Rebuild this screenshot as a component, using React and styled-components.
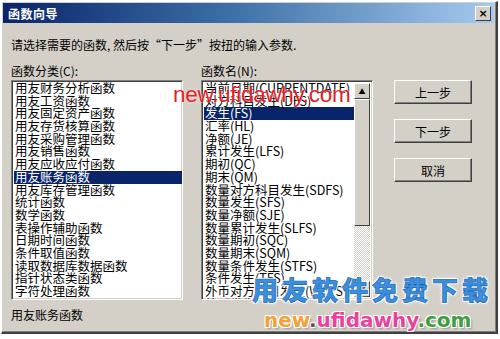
import React from "react";
import styled, { createGlobalStyle } from "styled-components";

const GlobalStyle = createGlobalStyle`
  body {
    margin: 0;
    background: #ffffff;
    font-family: "Noto Sans CJK SC", "DejaVu Sans", sans-serif;
  }
`;

const Dialog = styled.div`
  position: relative;
  width: 494px;
  height: 330px;
  margin: 1px 0 0 1px;
  background: #d4d0c8;
  border-top: 1px solid #ffffff;
  border-left: 1px solid #ffffff;
  border-right: 2px solid #404040;
  border-bottom: 2px solid #404040;
  box-shadow: inset -1px -1px 0 #808080;
  overflow: hidden;
`;

const TitleBar = styled.div`
  display: flex;
  align-items: center;
  justify-content: space-between;
  height: 20px;
  margin: 1px 2px 0 1px;
  padding: 0 3px 0 5px;
  background: linear-gradient(to right, #0a246a 0%, #3a6ea5 45%, #a6caf0 100%);
`;

const TitleText = styled.span`
  color: #ffffff;
  font-size: 12px;
  font-weight: bold;
  letter-spacing: 0.5px;
`;

const CloseButton = styled.div`
  width: 14px;
  height: 13px;
  display: flex;
  align-items: center;
  justify-content: center;
  background: #d4d0c8;
  border-top: 1px solid #ffffff;
  border-left: 1px solid #ffffff;
  border-right: 1px solid #404040;
  border-bottom: 1px solid #404040;
  font-family: "DejaVu Sans", sans-serif;
  font-size: 11px;
  font-weight: bold;
  line-height: 1;
  color: #000;
`;

const Body = styled.div`
  padding: 0 0 0 9px;
`;

const Instruction = styled.div`
  margin-top: 15px;
  font-size: 12px;
  line-height: 14px;
  color: #000;
`;

const Row = styled.div`
  display: flex;
  margin-top: 12px;
`;

const Column = styled.div`
  display: flex;
  flex-direction: column;
  width: ${(p) => p.$width}px;
  margin-right: ${(p) => p.$gap || 0}px;
`;

const Label = styled.div`
  font-size: 12px;
  line-height: 14px;
  height: 14px;
  margin-bottom: 2px;
  color: #000;
`;

const ListBox = styled.div`
  display: flex;
  height: 220px;
  background: #ffffff;
  border-top: 1px solid #808080;
  border-left: 1px solid #808080;
  border-right: 1px solid #ffffff;
  border-bottom: 1px solid #ffffff;
  box-shadow: inset 1px 1px 0 #404040, inset -1px -1px 0 #d4d0c8;
  box-sizing: border-box;
  overflow: hidden;
`;

const Items = styled.div`
  flex: 1;
  padding: 1px 0 0 2px;
  overflow: hidden;
`;

const Item = styled.div`
  height: 12.7px;
  line-height: 12.7px;
  font-size: 12.5px;
  padding-left: 1px;
  white-space: nowrap;
  color: ${(p) => (p.$selected ? "#ffffff" : "#000000")};
  background: ${(p) => (p.$selected ? "#0a246a" : "transparent")};
`;

const ScrollBar = styled.div`
  display: flex;
  flex-direction: column;
  width: 16px;
  margin: 2px 2px 2px 0;
  background-color: #ece9e4;
  background-image: repeating-conic-gradient(#ffffff 0 25%, #d4d0c8 0 50%);
  background-size: 2px 2px;
`;

const ScrollPart = styled.div`
  height: ${(p) => p.$h}px;
  flex: ${(p) => (p.$grow ? 1 : "none")};
  display: flex;
  align-items: center;
  justify-content: center;
  box-sizing: border-box;
  background: ${(p) => (p.$track ? "transparent" : "#d4d0c8")};
  border-top: ${(p) => (p.$track ? "none" : "1px solid #ffffff")};
  border-left: ${(p) => (p.$track ? "none" : "1px solid #ffffff")};
  border-right: ${(p) => (p.$track ? "none" : "1px solid #404040")};
  border-bottom: ${(p) => (p.$track ? "none" : "1px solid #404040")};
  font-size: 7px;
  color: #000;
`;

const Buttons = styled.div`
  display: flex;
  flex-direction: column;
  gap: 15px;
  padding-top: 16px;
`;

const Button = styled.div`
  width: 78px;
  height: 24px;
  box-sizing: border-box;
  display: flex;
  align-items: center;
  justify-content: center;
  font-size: 12px;
  color: #000;
  background: #d4d0c8;
  border-top: 1px solid #ffffff;
  border-left: 1px solid #ffffff;
  border-right: 1px solid #404040;
  border-bottom: 1px solid #404040;
  box-shadow: inset -1px -1px 0 #808080;
`;

const Status = styled.div`
  margin-top: 8px;
  font-size: 12px;
  line-height: 14px;
  color: #000;
`;

const MarkRed = styled.div`
  position: absolute;
  left: 171px;
  top: 80px;
  font-family: "Liberation Sans", Arial, sans-serif;
  font-size: 22.5px;
  letter-spacing: -0.3px;
  color: #e51c23;
  text-shadow: 0 0 2px #ffffff;
  pointer-events: none;
`;

const MarkBlue = styled.div`
  position: absolute;
  left: 250px;
  top: 272px;
  font-size: 26px;
  font-weight: 900;
  letter-spacing: 4px;
  line-height: 30px;
  color: #3b8fdc;
  -webkit-text-stroke: 0.6px #1b5fae;
  text-shadow: 1px 1px 0 #ffffff, -1px -1px 0 #ffffff, 1px -1px 0 #ffffff,
    -1px 1px 0 #ffffff, 0 0 4px #ffffff;
  pointer-events: none;
`;

const MarkUrl = styled.div`
  position: absolute;
  left: 262px;
  top: 306px;
  font-family: "DejaVu Sans", sans-serif;
  font-size: 20px;
  font-weight: bold;
  line-height: 24px;
  text-shadow: 1px 1px 0 #ffffff, -1px -1px 0 #ffffff, 1px -1px 0 #ffffff,
    -1px 1px 0 #ffffff, 2px 2px 2px #999999;
  pointer-events: none;
`;

const Part = styled.span`
  color: ${(p) => p.$color};
`;

const categories = [
  "用友财务分析函数",
  "用友工资函数",
  "用友固定资产函数",
  "用友存货核算函数",
  "用友采购管理函数",
  "用友销售函数",
  "用友应收应付函数",
  "用友账务函数",
  "用友库存管理函数",
  "统计函数",
  "数学函数",
  "表操作辅助函数",
  "日期时间函数",
  "条件取值函数",
  "读取数据库数据函数",
  "指针状态类函数",
  "字符处理函数",
];

const functions = [
  "当前日期(CURRENTDATE)",
  "对方科目发生(DFS)",
  "发生(FS)",
  "汇率(HL)",
  "净额(JE)",
  "累计发生(LFS)",
  "期初(QC)",
  "期末(QM)",
  "数量对方科目发生(SDFS)",
  "数量发生(SFS)",
  "数量净额(SJE)",
  "数量累计发生(SLFS)",
  "数量期初(SQC)",
  "数量期末(SQM)",
  "数量条件发生(STFS)",
  "条件发生(TFS)",
  "外币对方科目发生(WDFS)",
  "外币发生(WFS)",
];

export default function App() {
  return (
    <>
      <GlobalStyle />
      <Dialog>
        <TitleBar>
          <TitleText>函数向导</TitleText>
          <CloseButton>×</CloseButton>
        </TitleBar>
        <Body>
          <Instruction>请选择需要的函数, 然后按“下一步”按扭的输入参数.</Instruction>
          <Row>
            <Column $width={172} $gap={18}>
              <Label>函数分类(C):</Label>
              <ListBox>
                <Items>
                  {categories.map((c) => (
                    <Item key={c} $selected={c === "用友账务函数"}>
                      {c}
                    </Item>
                  ))}
                </Items>
              </ListBox>
            </Column>
            <Column $width={172} $gap={21}>
              <Label>函数名(N):</Label>
              <ListBox>
                <Items>
                  {functions.map((f) => (
                    <Item key={f} $selected={f === "发生(FS)"}>
                      {f}
                    </Item>
                  ))}
                </Items>
                <ScrollBar>
                  <ScrollPart $h={16}>▲</ScrollPart>
                  <ScrollPart $h={127} />
                  <ScrollPart $track $grow />
                  <ScrollPart $h={16}>▼</ScrollPart>
                </ScrollBar>
              </ListBox>
            </Column>
            <Buttons>
              <Button>上一步</Button>
              <Button>下一步</Button>
              <Button>取消</Button>
            </Buttons>
          </Row>
          <Status>用友账务函数</Status>
        </Body>
        <MarkRed>new.ufidawhy.com</MarkRed>
        <MarkBlue>用友软件免费下载</MarkBlue>
        <MarkUrl>
          <Part $color="#f0a33a">new</Part>
          <Part $color="#555555">.</Part>
          <Part $color="#e8429c">ufidawhy</Part>
          <Part $color="#3f9e3f">.com</Part>
        </MarkUrl>
      </Dialog>
    </>
  );
}
